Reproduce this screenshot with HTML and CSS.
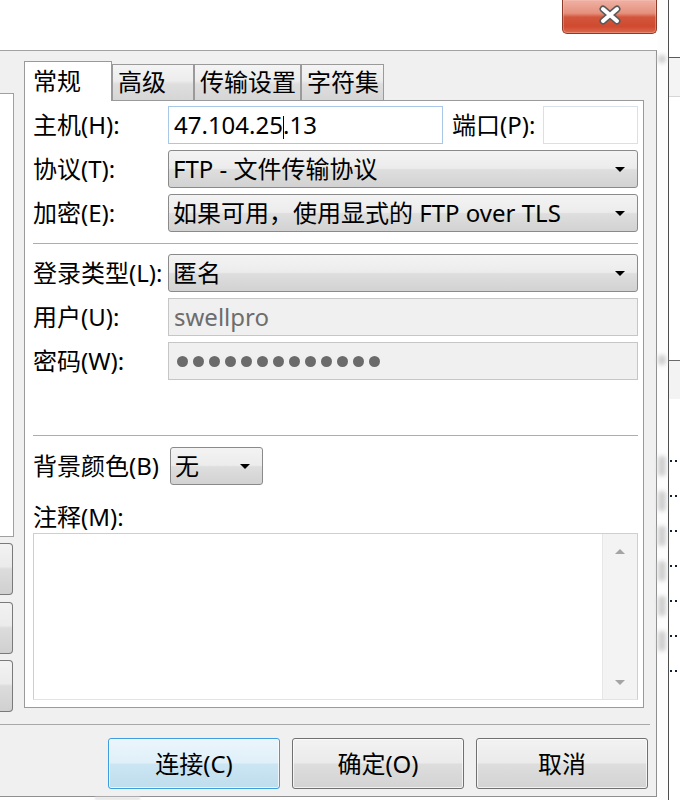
FILE: index.html
```html
<!DOCTYPE html>
<html lang="zh-CN">
<head>
<meta charset="utf-8">
<title>站点管理器</title>
<link rel="stylesheet" href="styles.css">
</head>
<body>
<div class="screen">
  <div class="main">
    <div class="titlebar">
      <div class="close-btn">
        <svg class="close-x" width="22" height="20" viewBox="0 0 22 20">
          <path d="M4 4 L18 16 M18 4 L4 16" stroke="#5a5a5a" stroke-width="7" stroke-linecap="round" fill="none"/>
          <path d="M4 4 L18 16 M18 4 L4 16" stroke="#ffffff" stroke-width="4" stroke-linecap="round" fill="none"/>
        </svg>
      </div>
    </div>
    <div class="dialog">
      <div class="dlg-body">
        <div class="side">
          <div class="tree"></div>
          <div class="side-btn first"></div>
          <div class="side-btn second"></div>
          <div class="side-btn third"></div>
        </div>
        <div class="notebook">
          <div class="tabs">
            <div class="tab active t1">常规</div>
            <div class="tab t2">高级</div>
            <div class="tab t3">传输设置</div>
            <div class="tab t4">字符集</div>
          </div>
          <div class="panel">
            <div class="row">
              <span class="lbl">主机(H):</span>
              <div class="input host">47.104.25<span class="caret"></span>.13</div>
              <span class="lbl port-lbl">端口(P):</span>
              <div class="input port"></div>
            </div>
            <div class="row gap">
              <span class="lbl">协议(T):</span>
              <div class="combo wide"><span class="combo-text">FTP - 文件传输协议</span><span class="arrow"></span></div>
            </div>
            <div class="row gap">
              <span class="lbl">加密(E):</span>
              <div class="combo wide"><span class="combo-text">如果可用，使用显式的 FTP over TLS</span><span class="arrow"></span></div>
            </div>
            <div class="psep first-sep"></div>
            <div class="row">
              <span class="lbl">登录类型(L):</span>
              <div class="combo wide"><span class="combo-text">匿名</span><span class="arrow"></span></div>
            </div>
            <div class="row gap">
              <span class="lbl">用户(U):</span>
              <div class="input disabled wide">swellpro</div>
            </div>
            <div class="row gap">
              <span class="lbl">密码(W):</span>
              <div class="input disabled wide">
                <span class="dots">
                  <i></i><i></i><i></i><i></i><i></i><i></i><i></i><i></i><i></i><i></i><i></i><i></i><i></i>
                </span>
              </div>
            </div>
            <div class="psep second-sep"></div>
            <div class="row">
              <span class="lbl bg-lbl">背景颜色(B)</span>
              <div class="combo small"><span class="combo-text">无</span><span class="arrow"></span></div>
            </div>
            <div class="note-row"><span class="lbl">注释(M):</span></div>
            <div class="textarea">
              <div class="ta-body"></div>
              <div class="vscroll">
                <span class="sarrow up"></span>
                <span class="sarrow down"></span>
              </div>
            </div>
          </div>
        </div>
      </div>
      <div class="dlg-sep"></div>
      <div class="dlg-buttons">
        <div class="btn default">连接(C)</div>
        <div class="btn">确定(O)</div>
        <div class="btn">取消</div>
      </div>
    </div>
    <div class="below"><div class="below-blob"></div></div>
  </div>
  <div class="strip">
    <div class="blob top-blob"></div>
    <div class="blob mid-blob"></div>
    <div class="blob row-blob first-row"></div>
    <div class="blob row-blob"></div>
    <div class="blob row-blob"></div>
    <div class="blob row-blob"></div>
    <div class="blob row-blob"></div>
    <div class="blob row-blob"></div>
  </div>
  <div class="vline"></div>
  <div class="right-pane">
    <div class="rp-top"></div>
    <div class="rp-head"></div>
    <div class="rp-list"></div>
    <div class="rp-head2"></div>
    <div class="rp-items">
      <div class="dotrow"><i></i><i></i></div>
      <div class="dotrow"><i></i><i></i></div>
      <div class="dotrow"><i></i><i></i></div>
      <div class="dotrow"><i></i><i></i></div>
      <div class="dotrow"><i></i><i></i></div>
      <div class="dotrow"><i></i><i></i></div>
      <div class="dotrow"><i></i><i></i></div>
    </div>
  </div>
</div>
</body>
</html>
```

FILE: styles.css
```css
* { box-sizing: border-box; }

html, body {
  margin: 0;
  padding: 0;
  background: #ffffff;
}

body {
  width: 680px;
  height: 800px;
  overflow: hidden;
  font-family: "Noto Sans", "Noto Sans CJK SC", sans-serif;
  font-size: 24px;
  color: #000000;
}

.screen {
  display: flex;
  width: 680px;
  height: 800px;
}

.main {
  width: 657px;
  flex: none;
  display: flex;
  flex-direction: column;
}

/* title bar */
.titlebar {
  height: 50px;
  display: flex;
  justify-content: flex-end;
  background: #ffffff;
}

.close-btn {
  width: 95px;
  height: 34px;
  border: 1px solid #8d3a2a;
  border-top: none;
  border-radius: 0 0 5px 5px;
  background: linear-gradient(#eeb2a4 0%, #e6907d 40%, #d2563b 52%, #cf4a30 80%, #dc6a4e 100%);
  display: flex;
  align-items: center;
  justify-content: center;
  padding-bottom: 3px;
  box-shadow: inset 0 0 0 1px rgba(255, 200, 190, 0.35);
}

/* dialog */
.dialog {
  height: 747px;
  background: #f0f0f0;
  border-top: 1px solid #a2a2a2;
  border-right: 1px solid #8f8f8f;
  border-bottom: 1px solid #8f8f8f;
  display: flex;
  flex-direction: column;
}

.dlg-body {
  display: flex;
  align-items: flex-start;
  padding-top: 10px;
  height: 662px;
}

.side {
  width: 14px;
  flex: none;
  margin-top: 32px;
  display: flex;
  flex-direction: column;
}

.tree {
  height: 444px;
  background: #ffffff;
  border-top: 1px solid #a0a0a0;
  border-right: 1px solid #a0a0a0;
  border-bottom: 1px solid #a0a0a0;
}

.side-btn {
  width: 13px;
  height: 52px;
  border: 1px solid #7a7a7a;
  border-left: none;
  border-radius: 0 4px 4px 0;
  background: linear-gradient(#f2f2f2 0%, #ebebeb 45%, #dcdcdc 50%, #d0d0d0 100%);
}

.side-btn.first { margin-top: 6px; }
.side-btn.second { margin-top: 7px; }
.side-btn.third { margin-top: 6px; }

.notebook {
  width: 620px;
  flex: none;
  margin-left: 10px;
  display: flex;
  flex-direction: column;
}

.tabs {
  height: 39px;
  display: flex;
  align-items: flex-end;
}

.tab {
  height: 36px;
  border: 1px solid #9a9a9a;
  border-bottom: none;
  background: linear-gradient(#f4f4f4 0%, #ececec 45%, #dedede 55%, #d6d6d6 100%);
  line-height: 34px;
  padding-left: 5px;
  white-space: nowrap;
}

.tab.active {
  height: 40px;
  margin-bottom: -1px;
  background: #ffffff;
  position: relative;
  z-index: 1;
  padding-left: 8px;
  line-height: 38px;
}

.t1 { width: 88px; }
.t2 { width: 82px; }
.t3 { width: 107px; }
.t4 { width: 83px; }

.panel {
  height: 608px;
  border: 1px solid #9a9a9a;
  background: #ffffff;
  padding: 5px 5px 0 8px;
  display: flex;
  flex-direction: column;
}

.row {
  height: 38px;
  display: flex;
  align-items: center;
  flex: none;
}

.row.gap { margin-top: 6px; }

.lbl {
  width: 135px;
  flex: none;
  white-space: nowrap;
  line-height: 24px;
}

.port-lbl {
  width: 91px;
  margin-left: 9px;
}

.bg-lbl { width: 137px; }

.input {
  height: 38px;
  border: 1px solid #d9e1e8;
  background: #ffffff;
  padding-left: 5px;
  line-height: 36px;
  white-space: nowrap;
}

.input.host {
  width: 275px;
  border-color: #a9c7e6;
}

.caret {
  display: inline-block;
  width: 1px;
  height: 23px;
  background: #000000;
  vertical-align: -5px;
  margin: 0 -1px 0 0;
}

.input.port { width: 95px; }

.input.wide { width: 470px; }

.input.disabled {
  background: #f0f0f0;
  border-color: #c6c6c6;
  color: #6d6d6d;
  display: flex;
  align-items: center;
}

.dots {
  display: flex;
  gap: 5px;
  padding-left: 3px;
}

.dots i {
  width: 11px;
  height: 11px;
  border-radius: 50%;
  background: #6b6b6b;
  display: block;
}

.combo {
  height: 38px;
  border: 1px solid #8a8a8a;
  border-radius: 3px;
  background: linear-gradient(#f3f3f3 0%, #ececec 48%, #dedede 52%, #d2d2d2 100%);
  display: flex;
  align-items: center;
  padding-left: 4px;
  padding-right: 12px;
  white-space: nowrap;
}

.combo.wide { width: 470px; }

.combo.small { width: 93px; }

.combo-text {
  flex: 1;
  line-height: 36px;
}

.arrow {
  width: 0;
  height: 0;
  border-left: 5px solid transparent;
  border-right: 5px solid transparent;
  border-top: 5px solid #000000;
  flex: none;
}

.psep {
  height: 1px;
  background: #adadad;
  flex: none;
}

.first-sep { margin: 11px 0 10px; }
.second-sep { margin: 55px 0 11px; }

.note-row {
  height: 48px;
  flex: none;
  padding-top: 15px;
}

.textarea {
  height: 167px;
  flex: none;
  border: 1px solid #cfcfcf;
  border-bottom-color: #dde5ec;
  background: #ffffff;
  display: flex;
}

.ta-body { flex: 1; }

.vscroll {
  width: 35px;
  background: #f3f3f3;
  border-left: 1px solid #e6e6e6;
  display: flex;
  flex-direction: column;
  justify-content: space-between;
  align-items: center;
  padding: 15px 0 14px;
}

.sarrow {
  width: 0;
  height: 0;
  border-left: 5px solid transparent;
  border-right: 5px solid transparent;
}

.sarrow.up { border-bottom: 5px solid #a4a4a4; }
.sarrow.down { border-top: 5px solid #a4a4a4; }

.dlg-sep {
  height: 1px;
  background: #a8a8a8;
  margin: 11px 6px 0 0;
  flex: none;
}

.dlg-buttons {
  display: flex;
  justify-content: flex-end;
  gap: 12px;
  margin-top: 13px;
  padding-right: 8px;
}

.btn {
  width: 172px;
  height: 51px;
  border: 1px solid #707070;
  border-radius: 3px;
  background: linear-gradient(#f2f2f2 0%, #ebebeb 48%, #dddddd 52%, #d3d3d3 100%);
  box-shadow: inset 0 0 0 1px rgba(255, 255, 255, 0.7);
  display: flex;
  align-items: center;
  justify-content: center;
  line-height: 24px;
}

.btn.default {
  border-color: #3c9ede;
  background: linear-gradient(#ebf5fb 0%, #e0f0f9 48%, #cbe5f3 52%, #bfdded 100%);
}

.below {
  height: 3px;
  background: #ffffff;
  padding-left: 95px;
}

.below-blob {
  width: 45px;
  height: 3px;
  background: #e4e4e4;
  filter: blur(1px);
}

/* right side strips */
.strip {
  width: 11px;
  flex: none;
  background: #fdfdfd;
  display: flex;
  flex-direction: column;
}

.blob {
  width: 8px;
  margin-left: 1px;
  background: #cfcfcf;
  border-radius: 3px;
  filter: blur(2px);
  flex: none;
}

.top-blob { height: 8px; margin-top: 55px; }
.mid-blob { height: 10px; margin-top: 292px; }
.row-blob { height: 20px; margin-top: 15px; }
.row-blob.first-row { margin-top: 91px; }

.vline {
  width: 1px;
  flex: none;
  background: #4e4e4e;
}

.right-pane {
  width: 11px;
  flex: none;
  background: #ffffff;
  display: flex;
  flex-direction: column;
}

.rp-top {
  height: 58px;
  border-bottom: 1px solid #5a5a5a;
}

.rp-head {
  height: 39px;
  background: #f4f4f4;
  border-bottom: 1px solid #d6d6d6;
}

.rp-list {
  height: 264px;
  border-bottom: 1px solid #6a6a6a;
}

.rp-head2 {
  height: 38px;
  background: #f3f3f3;
}

.rp-items {
  display: flex;
  flex-direction: column;
  padding-top: 61px;
  gap: 33px;
}

.dotrow {
  display: flex;
  gap: 3px;
  padding-left: 1px;
  height: 2px;
}

.dotrow i {
  width: 2px;
  height: 2px;
  background: #10203a;
  display: block;
}
```
